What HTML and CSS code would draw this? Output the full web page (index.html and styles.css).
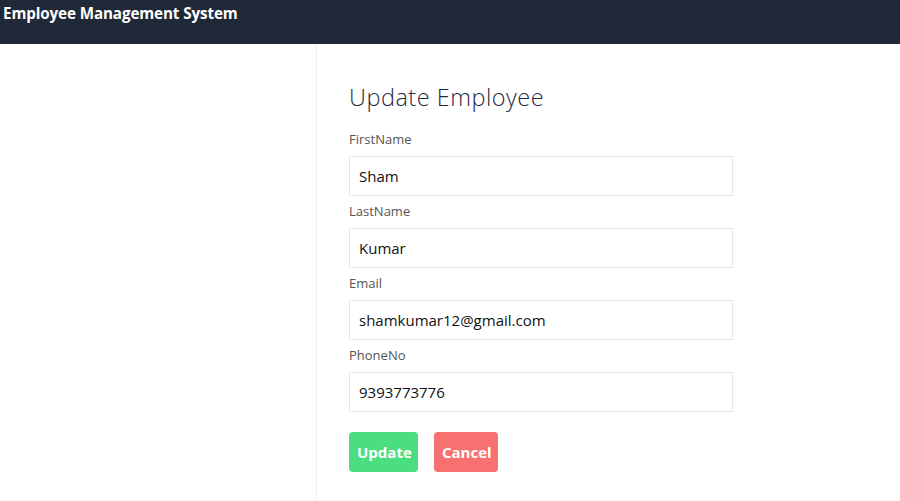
FILE: index.html
```html
<!DOCTYPE html>
<html>
<head>
<meta charset="utf-8">
<link rel="stylesheet" href="styles.css">
</head>
<body>
<header class="topbar">
  <span class="brand">Employee Management System</span>
</header>
<main class="page">
  <section class="card">
    <h2 class="title">Update Employee</h2>
    <form class="form">
      <div class="field">
        <label class="label">FirstName</label>
        <input class="input" type="text" value="Sham">
      </div>
      <div class="field">
        <label class="label">LastName</label>
        <input class="input" type="text" value="Kumar">
      </div>
      <div class="field">
        <label class="label">Email</label>
        <input class="input" type="text" value="shamkumar12@gmail.com">
      </div>
      <div class="field">
        <label class="label">PhoneNo</label>
        <input class="input" type="text" value="9393773776">
      </div>
      <div class="actions">
        <button type="button" class="btn btn-update">Update</button>
        <button type="button" class="btn btn-cancel">Cancel</button>
      </div>
    </form>
  </section>
</main>
</body>
</html>
```
FILE: styles.css
```css
* { box-sizing: border-box; }
html, body { margin: 0; padding: 0; background: #fff; }
body {
  font-family: "Open Sans", "Noto Sans", sans-serif;
  overflow: hidden;
  height: 501px;
}
.topbar {
  height: 44px;
  background: #1f2937;
  padding: 2px 0 0 3px;
}
.brand {
  color: #fff;
  font-weight: 700;
  font-size: 15.2px;
  line-height: 20px;
  letter-spacing: -0.1px;
}
.page {
  display: flex;
  padding-left: 316px;
  height: 457px;
}
.card {
  flex: 1;
  border-left: 1px solid #f0f0f2;
  padding: 37px 0 0 32px;
}
.title {
  margin: 0;
  font-weight: 300;
  font-size: 23.5px;
  line-height: 32px;
  color: #1f2a44;
  letter-spacing: 0.5px;
}
.form { margin-top: 17px; }
.field { display: flex; flex-direction: column; }
.label {
  font-size: 13px;
  line-height: 18px;
  color: #555;
  height: 22px;
  margin-bottom: 4px;
}
.input {
  width: 384px;
  height: 40px;
  border: 1px solid #e5e5ea;
  border-radius: 1px;
  padding: 0 9px;
  font-family: inherit;
  font-size: 15px;
  color: #111;
  outline: none;
  background: #fff;
  margin-bottom: 6px;
}
.actions {
  display: flex;
  gap: 16px;
  margin-top: 14px;
}
.btn {
  height: 40px;
  border: none;
  border-radius: 4px;
  color: #fff;
  font-family: inherit;
  font-weight: 700;
  font-size: 15px;
  padding: 0 8px;
}
.btn-update { background: #4ade80; width: 69px; }
.btn-cancel { background: #f87171; width: 64px; }
```
